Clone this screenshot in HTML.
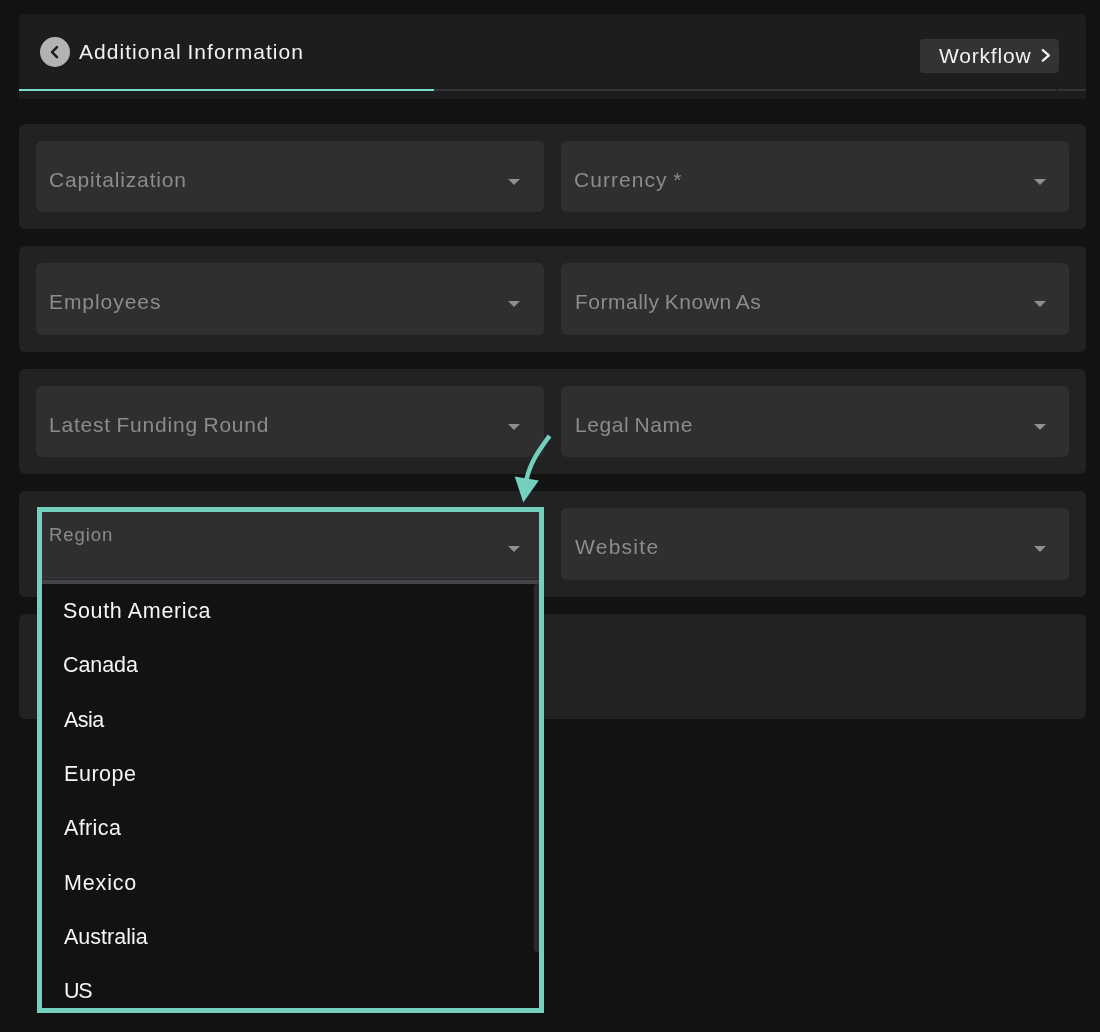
<!DOCTYPE html>
<html><head><meta charset="utf-8">
<style>
*{box-sizing:border-box;margin:0;padding:0}
html,body{width:1100px;height:1032px;background:#121212;overflow:hidden;font-family:"Liberation Sans",sans-serif;position:relative}
.abs{position:absolute}
.t{white-space:nowrap;line-height:1;will-change:transform}
.card{left:19px;width:1067px;height:105.5px;background:#222222;border-radius:6px}
.field{position:absolute;width:508px;height:71.5px;background:#2f2f2f;border-radius:6px}
.tri{position:absolute;width:0;height:0;border-left:6px solid transparent;border-right:6px solid transparent;border-top:6px solid #8e8e93}
</style></head><body>
<div class="abs" style="left:19px;top:14px;width:1067px;height:85px;background:#1d1d1f;border-radius:5px 5px 0 0"></div>
<div class="abs" style="left:19px;top:89px;width:1067px;height:2px;background:#353537"></div>
<div class="abs" style="left:1056px;top:89px;width:1px;height:2px;background:#1d1d1f"></div>
<div class="abs" style="left:19px;top:89px;width:415px;height:2px;background:#76dccb"></div>
<div class="abs" style="left:39.8px;top:36.8px;width:30.5px;height:30.5px;border-radius:50%;background:#b3b3b3"></div>
<svg class="abs" style="left:0;top:0" width="100" height="100" viewBox="0 0 100 100"><path d="M57 47.1 L52 52.1 L57 57.1" fill="none" stroke="#1d1d1f" stroke-width="2.5" stroke-linecap="round" stroke-linejoin="round"/></svg>
<div class="abs" style="left:920px;top:39px;width:139px;height:34px;background:#333335;border-radius:4px"></div>
<svg class="abs" style="left:1030px;top:40px" width="30" height="30" viewBox="1030 40 30 30"><path d="M1042.8 50.1 L1048.9 55.4 L1042.8 60.7" fill="none" stroke="#f2f2f2" stroke-width="2.3" stroke-linecap="round" stroke-linejoin="round"/></svg>
<div class="abs t" id="title" style="left:79.30px;top:41.11px;font-size:21px;color:#f2f2f2;letter-spacing:1.038px;word-spacing:-1px">Additional Information</div>
<div class="abs t" id="wf" style="left:938.60px;top:45.11px;font-size:21px;color:#f2f2f2;letter-spacing:0.807px;word-spacing:0px">Workflow</div>
<div class="abs card" style="top:124px;height:105px"></div>
<div class="abs card" style="top:246px;height:106px"></div>
<div class="abs card" style="top:369px;height:105px"></div>
<div class="abs card" style="top:491px;height:106px"></div>
<div class="abs card" style="top:614px;height:105px"></div>
<div class="field" style="left:36px;top:141px;height:71px"></div><div class="tri" style="left:508px;top:179px"></div>
<div class="abs t" id="cap" style="left:48.55px;top:168.81px;font-size:21px;color:#8b8b90;letter-spacing:0.842px;word-spacing:-1px">Capitalization</div>
<div class="field" style="left:561px;top:141px;height:71px"></div><div class="tri" style="left:1034px;top:179px"></div>
<div class="abs t" id="cur" style="left:574.25px;top:168.80px;font-size:21px;color:#8b8b90;letter-spacing:1.039px;word-spacing:-1px">Currency *</div>
<div class="field" style="left:36px;top:263px;height:72px"></div><div class="tri" style="left:508px;top:301px"></div>
<div class="abs t" id="emp" style="left:48.90px;top:291.11px;font-size:21px;color:#8b8b90;letter-spacing:0.937px;word-spacing:-1px">Employees</div>
<div class="field" style="left:561px;top:263px;height:72px"></div><div class="tri" style="left:1034px;top:301px"></div>
<div class="abs t" id="fka" style="left:574.55px;top:291.11px;font-size:21px;color:#8b8b90;letter-spacing:0.503px;word-spacing:-1px">Formally Known As</div>
<div class="field" style="left:36px;top:386px;height:71px"></div><div class="tri" style="left:508px;top:424px"></div>
<div class="abs t" id="lfr" style="left:49.25px;top:413.51px;font-size:21px;color:#8b8b90;letter-spacing:0.779px;word-spacing:-1px">Latest Funding Round</div>
<div class="field" style="left:561px;top:386px;height:71px"></div><div class="tri" style="left:1034px;top:424px"></div>
<div class="abs t" id="leg" style="left:574.55px;top:413.51px;font-size:21px;color:#8b8b90;letter-spacing:0.567px;word-spacing:-1px">Legal Name</div>
<div class="field" style="left:561px;top:508px;height:72px"></div><div class="tri" style="left:1034px;top:546px"></div>
<div class="abs t" id="web" style="left:575.35px;top:535.81px;font-size:21px;color:#8b8b90;letter-spacing:1.267px;word-spacing:-1px">Website</div>

<div class="abs" style="left:42px;top:512px;width:497px;height:65px;background:#2f2f2f"></div>
<div class="tri" style="left:508px;top:546px"></div>
<div class="abs t" id="reg" style="left:48.95px;top:525.91px;font-size:18.5px;color:#8b8b90;letter-spacing:0.940px;word-spacing:0px">Region</div>
<div class="abs" style="left:42px;top:577px;width:497px;height:1px;background:#3a3a3c"></div>
<div class="abs" style="left:42px;top:578px;width:497px;height:2px;background:#2a2a2c"></div>
<div class="abs" style="left:42px;top:580px;width:497px;height:4px;background:#444448"></div>
<div class="abs" style="left:42px;top:584px;width:497px;height:424px;background:#121212"></div>
<div class="abs" style="left:534px;top:584px;width:5px;height:367.5px;background:#2a2a2a;border-radius:3px 0 0 3px"></div>
<div class="abs t" id="sa" style="left:62.55px;top:601.11px;font-size:21.5px;color:#f5f5f5;letter-spacing:0.646px;word-spacing:0px">South America</div>
<div class="abs t" id="ca" style="left:62.90px;top:655.40px;font-size:21.5px;color:#f5f5f5;letter-spacing:-0.070px;word-spacing:0px">Canada</div>
<div class="abs t" id="as" style="left:63.70px;top:709.70px;font-size:21.5px;color:#f5f5f5;letter-spacing:-0.567px;word-spacing:0px">Asia</div>
<div class="abs t" id="eu" style="left:63.55px;top:764.00px;font-size:21.5px;color:#f5f5f5;letter-spacing:0.550px;word-spacing:0px">Europe</div>
<div class="abs t" id="af" style="left:63.70px;top:818.40px;font-size:21.5px;color:#f5f5f5;letter-spacing:0.380px;word-spacing:0px">Africa</div>
<div class="abs t" id="mx" style="left:63.55px;top:872.70px;font-size:21.5px;color:#f5f5f5;letter-spacing:0.840px;word-spacing:0px">Mexico</div>
<div class="abs t" id="au" style="left:63.70px;top:927.01px;font-size:21.5px;color:#f5f5f5;letter-spacing:0.013px;word-spacing:0px">Australia</div>
<div class="abs t" id="us" style="left:63.55px;top:981.41px;font-size:21.5px;color:#f5f5f5;letter-spacing:-1.400px;word-spacing:0px">US</div>
<div class="abs" style="left:37px;top:507px;width:507px;height:506px;border:5px solid #74cfbf"></div>
<svg class="abs" style="left:0;top:0" width="1100" height="1032" viewBox="0 0 1100 1032">
  <path d="M549.6 435.8 C539 450 530.5 462 526.6 479" fill="none" stroke="#74cfbf" stroke-width="4.5"/>
  <path d="M514.7 476.6 L538.8 480.4 L523.3 502.5 Z" fill="#74cfbf"/>
</svg>
</body></html>
